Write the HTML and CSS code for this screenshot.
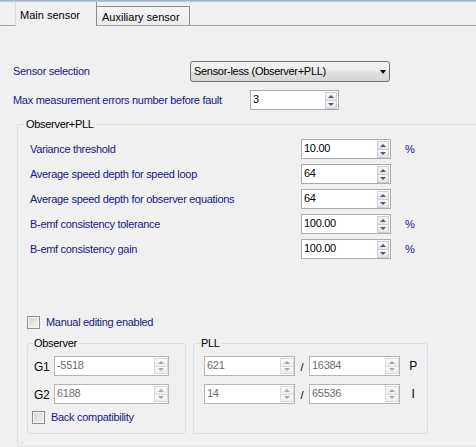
FILE: index.html
```html
<!DOCTYPE html>
<html>
<head>
<meta charset="utf-8">
<title>Sensor settings</title>
<link rel="stylesheet" href="styles.css">
</head>
<body>
<div class="frame-top"></div>
<div class="tabbar">
  <div class="tab active">Main sensor</div>
  <div class="tab inactive">Auxiliary sensor</div>
</div>
<div class="page">
  <div class="row r-sensor">
    <span class="lbl w-sensor">Sensor selection</span>
    <div class="combo"><span class="combo-text">Sensor-less (Observer+PLL)</span><span class="combo-arrow"></span></div>
  </div>
  <div class="row r-max">
    <span class="lbl w-max">Max measurement errors number before fault</span>
    <div class="num w-max-num"><span class="val">3</span><span class="spin"><span class="btn up"></span><span class="btn down"></span></span></div>
  </div>

  <fieldset class="grp main-grp">
    <legend>Observer+PLL</legend>
    <div class="params">
      <div class="prow"><span class="lbl plbl">Variance threshold</span><div class="num w-par"><span class="val">10.00</span><span class="spin"><span class="btn up"></span><span class="btn down"></span></span></div><span class="lbl unit">%</span></div>
      <div class="prow"><span class="lbl plbl">Average speed depth for speed loop</span><div class="num w-par"><span class="val">64</span><span class="spin"><span class="btn up"></span><span class="btn down"></span></span></div></div>
      <div class="prow"><span class="lbl plbl">Average speed depth for observer equations</span><div class="num w-par"><span class="val">64</span><span class="spin"><span class="btn up"></span><span class="btn down"></span></span></div></div>
      <div class="prow"><span class="lbl plbl">B-emf consistency tolerance</span><div class="num w-par"><span class="val">100.00</span><span class="spin"><span class="btn up"></span><span class="btn down"></span></span></div><span class="lbl unit">%</span></div>
      <div class="prow"><span class="lbl plbl">B-emf consistency gain</span><div class="num w-par"><span class="val">100.00</span><span class="spin"><span class="btn up"></span><span class="btn down"></span></span></div><span class="lbl unit">%</span></div>
    </div>

    <div class="chk-row manual"><span class="chk"></span><span class="lbl">Manual editing enabled</span></div>

    <div class="subgroups">
      <fieldset class="grp obs">
        <legend>Observer</legend>
        <div class="grow first"><span class="glbl">G1</span><div class="num dis w-obs"><span class="val">-5518</span><span class="spin"><span class="btn up"></span><span class="btn down"></span></span></div></div>
        <div class="grow"><span class="glbl">G2</span><div class="num dis w-obs"><span class="val">6188</span><span class="spin"><span class="btn up"></span><span class="btn down"></span></span></div></div>
        <div class="chk-row back"><span class="chk"></span><span class="lbl">Back compatibility</span></div>
      </fieldset>
      <fieldset class="grp pll">
        <legend>PLL</legend>
        <div class="grow first"><div class="num dis w-pll"><span class="val">621</span><span class="spin"><span class="btn up"></span><span class="btn down"></span></span></div><span class="slash">/</span><div class="num dis w-pll"><span class="val">16384</span><span class="spin"><span class="btn up"></span><span class="btn down"></span></span></div><span class="plab">P</span></div>
        <div class="grow"><div class="num dis w-pll"><span class="val">14</span><span class="spin"><span class="btn up"></span><span class="btn down"></span></span></div><span class="slash">/</span><div class="num dis w-pll"><span class="val">65536</span><span class="spin"><span class="btn up"></span><span class="btn down"></span></span></div><span class="plab">I</span></div>
      </fieldset>
    </div>
  </fieldset>
</div>
</body>
</html>
```

FILE: styles.css
```css
html, body {
  margin: 0;
  padding: 0;
}
html {
  overflow: hidden;
}
body {
  width: 476px;
  height: 447px;
  overflow: hidden;
  background: #f0f0f0;
  font-family: "Liberation Sans", Arial, sans-serif;
  font-size: 11px;
  line-height: 13px;
  letter-spacing: -0.3px;
  color: #000;
}

.frame-top {
  height: 2px;
  background: linear-gradient(#93a7c3, #cad6e6);
}

/* tabs */
.tabbar {
  display: flex;
  align-items: flex-end;
  height: 23px;
  border-bottom: 1px solid #a7a7a7;
}
.tab {
  box-sizing: border-box;
  white-space: nowrap;
  letter-spacing: 0;
}
.tab.active {
  margin-left: 15px;
  width: 82px;
  height: 24px;
  margin-bottom: -1px;
  padding: 7px 0 0 4px;
  background: #f0f0f0;
  border-left: 1px solid #dadada;
  border-right: 1px solid #8c8c8c;
}
.tab.inactive {
  width: 93px;
  height: 19px;
  padding: 4px 0 0 5px;
  border-top: 1px solid #8c8c8c;
  border-right: 1px solid #8c8c8c;
  background: linear-gradient(#f4f4f4, #ebebeb);
}

/* page */
.page {
  padding-left: 13px;
}
.row {
  display: flex;
  align-items: center;
}
.lbl {
  color: #17178a;
  white-space: nowrap;
}
.r-sensor {
  margin-top: 35px;
  height: 21px;
}
.w-sensor { width: 177px; }
.r-max {
  margin-top: 8px;
  height: 20px;
}
.w-max { width: 237px; }

.combo {
  box-sizing: border-box;
  width: 200px;
  height: 21px;
  border: 1px solid #707070;
  border-radius: 3px;
  background: linear-gradient(#f3f3f3 0%, #ececec 48%, #dfdfdf 52%, #d6d6d6 100%);
  display: flex;
  align-items: center;
  padding-left: 3px;
}
.combo-text { white-space: nowrap; }
.combo-arrow {
  margin-left: auto;
  margin-right: 3px;
  width: 0;
  height: 0;
  border-left: 3.5px solid transparent;
  border-right: 3.5px solid transparent;
  border-top: 4px solid #000;
}

/* numeric up-down */
.num {
  box-sizing: border-box;
  height: 20px;
  border: 1px solid #a9abb0;
  background: #fff;
  display: flex;
  align-items: stretch;
}
.num .val {
  flex: 1;
  padding-left: 2px;
  display: flex;
  align-items: center;
  padding-bottom: 1px;
}
.num .spin {
  width: 12px;
  margin: 1px 1px 0 0;
  display: flex;
  flex-direction: column;
}
.num .btn {
  flex: 1;
  box-sizing: border-box;
  border: 1px solid #cfcfcf;
  background: linear-gradient(#f7f7f7, #e4e4e4);
  display: flex;
  align-items: center;
  justify-content: center;
}
.num .btn.down { border-top: none; }
.num .btn.up::after {
  content: "";
  width: 0;
  height: 0;
  border-left: 3px solid transparent;
  border-right: 3px solid transparent;
  border-bottom: 3px solid #4a5c7e;
}
.num .btn.down::after {
  content: "";
  width: 0;
  height: 0;
  border-left: 3px solid transparent;
  border-right: 3px solid transparent;
  border-top: 3px solid #4a5c7e;
}
.num.dis {
  border-color: #b5b5b5;
}
.num.dis .val { color: #6d6d6d; }
.num.dis .spin { width: 14px; margin: 1px 0 1px 0; }
.num.dis .btn { border-color: #dadada; background: linear-gradient(#f8f8f8, #ededed); }
.num.dis .btn.up::after { border-bottom-color: #a8a8a8; }
.num.dis .btn.down::after { border-top-color: #a8a8a8; }

.w-max-num { width: 89px; }
.w-par { width: 90px; }
.w-obs { width: 115px; }
.w-pll { width: 91px; }

/* group boxes */
.grp {
  box-sizing: border-box;
  margin: 0;
  border: 1px solid #d5dfe5;
  border-radius: 3px;
  min-width: 0;
}
.grp legend {
  padding: 0 1px;
  line-height: 13px;
  color: #000;
}
.main-grp {
  margin-top: 8px;
  margin-left: 4px;
  width: 475px;
  padding: 0 0 12px 9px;
}
.main-grp > legend { margin-left: -2px; }

.params {
  margin-top: 8px;
  padding-left: 3px;
  display: flex;
  flex-direction: column;
  gap: 5px;
}
.prow {
  display: flex;
  align-items: center;
  height: 20px;
}
.plbl { width: 271px; }
.unit { margin-left: 14px; }

.chk-row {
  display: flex;
  align-items: center;
  height: 13px;
}
.chk {
  box-sizing: border-box;
  width: 13px;
  height: 13px;
  border: 1px solid #8f8f8f;
  background: linear-gradient(135deg, #d2d2d2, #f5f5f5);
  box-shadow: inset 0 0 0 1px #f4f4f4;
  margin-right: 6px;
  flex: none;
}
.manual { margin-top: 57px; }

.subgroups {
  margin-top: 8px;
  display: flex;
  gap: 7px;
}
.obs {
  width: 159px;
  height: 97px;
  padding: 0 6px;
}
.obs > legend { margin-left: -1px; }
.pll {
  width: 235px;
  height: 97px;
  padding: 0 0 0 10px;
}
.pll > legend { margin-left: -4px; }

.grow {
  display: flex;
  align-items: center;
  height: 20px;
  margin-top: 8px;
}
.grow.first { margin-top: 6px; }
.glbl {
  width: 20px;
  padding-top: 3px;
  font-size: 12px;
}
.back {
  margin-top: 7px;
  margin-left: -2px;
}
.slash {
  width: 14px;
  text-align: center;
  padding-top: 2px;
}
.plab {
  width: 14px;
  margin-left: 6px;
  text-align: center;
  font-size: 12px;
}
```
